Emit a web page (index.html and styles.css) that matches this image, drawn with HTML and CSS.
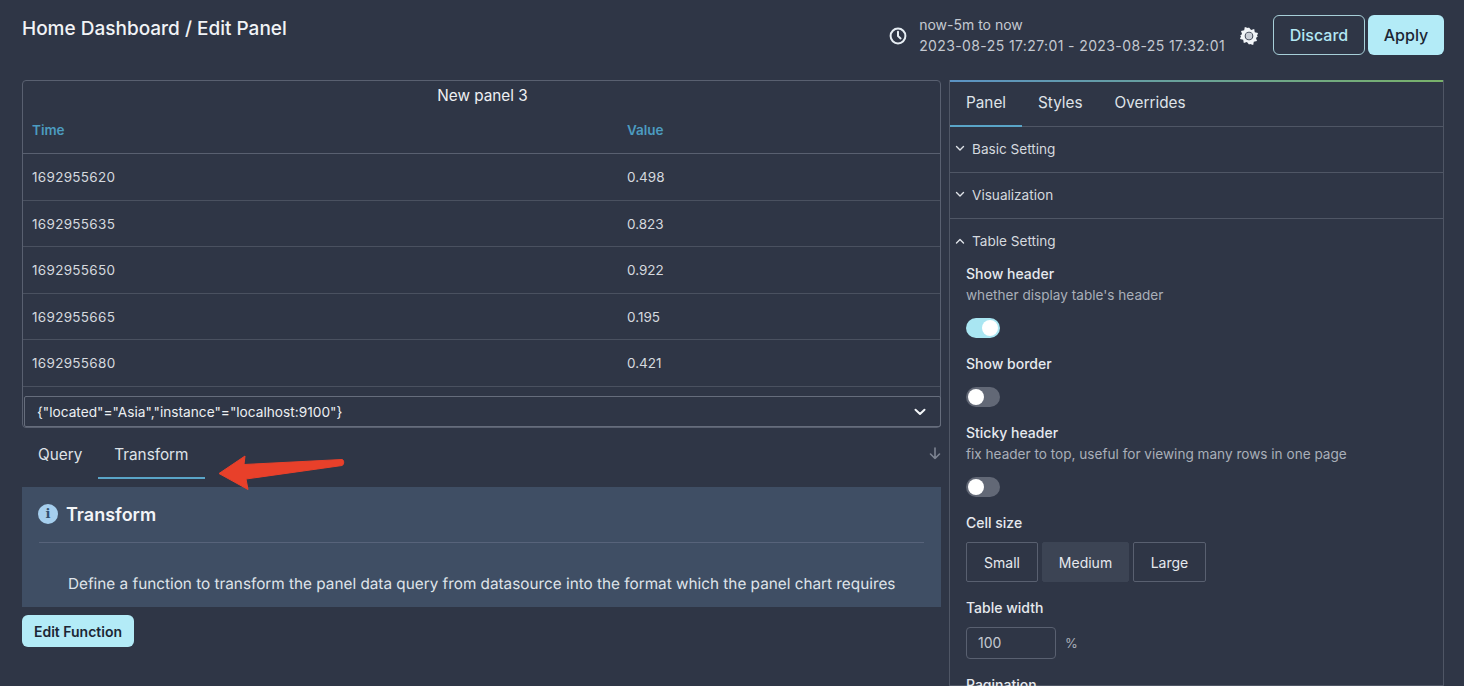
FILE: index.html
```html
<!DOCTYPE html>
<html lang="en">
<head>
    <meta charset="UTF-8">
    <title>Home Dashboard / Edit Panel</title>
    <link rel="stylesheet" href="styles.css">
</head>
<body>
    <header class="top-bar">
        <h1 class="page-title">Home Dashboard / Edit Panel</h1>
        <div class="top-actions">
            <svg class="clock-icon" width="18" height="18" viewBox="0 0 18 18" fill="none" stroke="#e6edf3" stroke-width="2" stroke-linecap="round" stroke-linejoin="round"><circle cx="9" cy="9" r="7.4"/><path d="M9 4.800V9l2.600 2.400"/></svg>
            <div class="time-range">
                <div>now-5m to now</div>
                <div class="time-exact">2023-08-25 17:27:01 - 2023-08-25 17:32:01</div>
            </div>
            <svg class="sun-icon" width="18" height="18" viewBox="0 0 18 18"><path fill="#f2f5f8" d="M9 .6l2.100 2.500 3.100-1 .6 3.200 3.200.6-1 3.100L18 9l-2 2 1 3.100-3.200.6-.6 3.200-3.100-1L9 17.400l-2.100-2.500-3.100 1-.6-3.200-3.200-.6 1-3.100L0 9l2-2-1-3.100 3.200-.6.6-3.200 3.100 1z"/><circle cx="9" cy="9" r="4.300" fill="#2f3646"/><circle cx="9" cy="9" r="3.400" fill="#c9ced6"/></svg>
            <button class="btn btn-outline">Discard</button>
            <button class="btn btn-primary">Apply</button>
        </div>
    </header>

    <main class="editor">
        <section class="left-col">
            <div class="preview">
                <div class="preview-title">New panel 3</div>
                <table class="data-table">
                    <thead>
                        <tr><th class="col-time">Time</th><th>Value</th></tr>
                    </thead>
                    <tbody>
                        <tr><td>1692955620</td><td>0.498</td></tr>
                        <tr><td>1692955635</td><td>0.823</td></tr>
                        <tr><td>1692955650</td><td>0.922</td></tr>
                        <tr><td>1692955665</td><td>0.195</td></tr>
                        <tr><td>1692955680</td><td>0.421</td></tr>
                    </tbody>
                </table>
                <div class="series-select">
                    <span>{"located"="Asia","instance"="localhost:9100"}</span>
                    <svg width="12" height="8" viewBox="0 0 12 8" fill="none" stroke="#f2f5f8" stroke-width="2" stroke-linecap="round" stroke-linejoin="round"><path d="M1.500 1.800L6 6l4.500-4.200"/></svg>
                </div>
            </div>

            <div class="query-tabs">
                <div class="tab">Query</div>
                <div class="tab tab-active">Transform</div>
                <svg class="down-icon" width="12" height="13" viewBox="0 0 12 13" fill="none" stroke="#7d8492" stroke-width="1.600" stroke-linecap="round" stroke-linejoin="round"><path d="M6 1v10.500M1.500 7L6 11.500 10.500 7"/></svg>
            </div>

            <div class="alert">
                <div class="alert-head">
                    <span class="info-icon">i</span>
                    <span class="alert-title">Transform</span>
                </div>
                <p class="alert-text">Define a function to transform the panel data query from datasource into the format which the panel chart requires</p>
            </div>
            <button class="btn-edit">Edit Function</button>
        </section>

        <aside class="settings">
            <div class="settings-tabs">
                <div class="tab tab-active">Panel</div>
                <div class="tab">Styles</div>
                <div class="tab">Overrides</div>
            </div>
            <div class="section-row">
                <svg width="10" height="7" viewBox="0 0 10 7" fill="none" stroke="#dfe3e8" stroke-width="1.400" stroke-linecap="round" stroke-linejoin="round"><path d="M1.500 1.500L5 5l3.500-3.500"/></svg>
                Basic Setting
            </div>
            <div class="section-row">
                <svg width="10" height="7" viewBox="0 0 10 7" fill="none" stroke="#dfe3e8" stroke-width="1.400" stroke-linecap="round" stroke-linejoin="round"><path d="M1.500 1.500L5 5l3.500-3.500"/></svg>
                Visualization
            </div>
            <div class="section-row section-open">
                <svg width="10" height="7" viewBox="0 0 10 7" fill="none" stroke="#dfe3e8" stroke-width="1.400" stroke-linecap="round" stroke-linejoin="round"><path d="M1.500 5L5 1.500 8.500 5"/></svg>
                Table Setting
            </div>
            <div class="section-body">
                <div class="field-label">Show header</div>
                <div class="field-help">whether display table's header</div>
                <div class="switch switch-on"><span class="knob"></span></div>

                <div class="field-label label-gap">Show border</div>
                <div class="switch switch-nohelp"><span class="knob"></span></div>

                <div class="field-label label-gap">Sticky header</div>
                <div class="field-help">fix header to top, useful for viewing many rows in one page</div>
                <div class="switch"><span class="knob"></span></div>

                <div class="field-label label-gap">Cell size</div>
                <div class="size-group">
                    <button class="size-btn size-small">Small</button>
                    <button class="size-btn size-medium">Medium</button>
                    <button class="size-btn size-large">Large</button>
                </div>

                <div class="field-label label-gap">Table width</div>
                <div class="width-row">
                    <div class="num-input">100</div>
                    <span class="unit">%</span>
                </div>

                <div class="field-label label-gap">Pagination</div>
            </div>
        </aside>
    </main>

    <svg class="red-arrow" width="130" height="36" viewBox="0 0 130 36"><path fill="#e8402a" stroke="#e8402a" stroke-width="1" stroke-linejoin="round" d="M1 18.500L27 1l-1 8.500 98-5c2 0 2.500 5 0 6L28 24l2 10.500z"/></svg>
</body>
</html>
```

FILE: styles.css
```css
html, body {
    height: 686px;
    overflow: hidden;
}
body {
    margin: 0;
    background-color: #2f3646;
    color: #e6e9ee;
    font-family: Inter, "Liberation Sans", sans-serif;
    font-size: 14px;
}
.top-bar {
    display: flex;
    justify-content: space-between;
    align-items: flex-start;
    height: 80px;
    padding: 14px 20px 0 22px;
    box-sizing: border-box;
}
.page-title {
    margin: 4px 0 0;
    font-size: 19px;
    line-height: 22px;
    font-weight: 500;
    color: #f1f3f6;
}
.top-actions {
    display: flex;
    align-items: center;
    margin-top: -1px;
}
.clock-icon {
    margin: 2px 12px 0 0;
}
.time-range {
    padding-top: 1px;
    font-size: 14px;
    line-height: 21px;
    color: #c4c9d1;
    margin-right: 15px;
}
.time-exact {
    letter-spacing: .39px;
}
.sun-icon {
    margin: 2px 15px 0 0;
}
.btn {
    height: 40px;
    border-radius: 6px;
    font-family: inherit;
    font-size: 16px;
    font-weight: 500;
}
.btn-outline {
    width: 92px;
    margin-right: 3px;
    background: transparent;
    border: 1px solid #a7cfd8;
    color: #b3e8f4;
}
.btn-primary {
    width: 76px;
    background-color: #b3ebf7;
    border: none;
    color: #1c2634;
}
.editor {
    display: grid;
    grid-template-columns: 919px 495px;
    column-gap: 8px;
    padding-left: 22px;
}
.preview {
    height: 348px;
    box-sizing: border-box;
    border: 1px solid #596070;
    border-radius: 4px;
    display: flex;
    flex-direction: column;
}
.preview-title {
    text-align: center;
    font-size: 15.300px;
    line-height: 18px;
    padding: 6px 0 0 2px;
    color: #eef0f3;
}
.data-table {
    width: 100%;
    border-collapse: collapse;
    font-size: 13.500px;
    color: #d5d9df;
}
.data-table th {
    height: 47px;
    padding: 1px 9px 0;
    text-align: left;
    font-size: 13.500px;
    font-weight: 600;
    color: #4c9cc0;
    border-bottom: 1px solid #596070;
}
.data-table .col-time {
    width: 577px;
}
.data-table td {
    height: 44.500px;
    padding: 1px 9px 0;
    border-bottom: 1px solid #4a5160;
}
.data-table td:first-child {
    letter-spacing: .3px;
}
.series-select {
    display: flex;
    justify-content: space-between;
    align-items: center;
    height: 31px;
    box-sizing: border-box;
    margin: 9px -1px 0 1px;
    padding: 1px 14px 0 12px;
    border: 1px solid #666d7c;
    border-radius: 2px;
    font-size: 13.700px;
    color: #eceff2;
}
.query-tabs {
    display: flex;
    align-items: center;
    height: 51px;
    box-sizing: border-box;
}
.tab {
    padding: 0 16px;
    font-size: 15.300px;
    line-height: 53px;
    height: 51px;
    box-sizing: border-box;
    color: #dfe3e8;
}
.tab-active {
    border-bottom: 2px solid #5aa5c8;
}
.down-icon {
    margin-left: auto;
}
.alert {
    height: 120px;
    margin-top: 8px;
    box-sizing: border-box;
    padding: 14px 16px 0;
    background-color: #3f4e64;
}
.alert-head {
    display: flex;
    align-items: center;
    height: 42px;
    margin: 0 1px;
    border-bottom: 1px solid #57637a;
    padding-bottom: 15px;
    box-sizing: border-box;
}
.info-icon {
    width: 20px;
    height: 20px;
    margin-left: -1px;
    margin-right: 8px;
    border-radius: 50%;
    background-color: #a6cfee;
    color: #33506e;
    font-family: "DejaVu Serif", serif;
    font-size: 13px;
    font-weight: 700;
    line-height: 20px;
    text-align: center;
}
.alert-title {
    font-size: 18px;
    font-weight: 600;
    color: #f2f4f7;
}
.alert-text {
    margin: 31px 0 0 30px;
    font-size: 15.300px;
    text-rendering: geometricPrecision;
    line-height: 20px;
    color: #dfe4ea;
    white-space: nowrap;
}
.btn-edit {
    display: block;
    width: 112px;
    height: 32px;
    margin-top: 8px;
    border: none;
    border-radius: 6px;
    background-color: #b3ebf7;
    color: #1c2634;
    font-family: inherit;
    font-size: 14px;
    font-weight: 600;
}
.settings {
    height: 606px;
    box-sizing: border-box;
    border: 1px solid #4f5665;
    border-top: none;
    background: linear-gradient(90deg, #5b93c4, #79b26a) top / 100% 2px no-repeat;
}
.settings-tabs {
    display: flex;
    height: 47px;
    padding-top: 2px;
    box-sizing: border-box;
    border-bottom: 1px solid #4f5665;
}
.settings-tabs .tab {
    height: 45px;
    line-height: 42px;
}
.section-row {
    display: flex;
    align-items: center;
    gap: 7px;
    height: 46px;
    padding: 0 0 2px 5px;
    box-sizing: border-box;
    border-bottom: 1px solid #4f5665;
    font-size: 13.600px;
    color: #d5d9df;
}
.section-open {
    border-bottom: none;
}
.section-body {
    padding: 0 16px;
}
.field-label {
    font-size: 14px;
    line-height: 16px;
    font-weight: 500;
    color: #e6e9ee;
    margin-top: 1px;
}
.field-help {
    font-size: 13.600px;
    line-height: 16px;
    margin-top: 5px;
    color: #a9afb9;
}
.switch {
    display: flex;
    align-items: center;
    width: 34px;
    height: 20px;
    margin-top: 15px;
    border-radius: 10px;
    background-color: #626876;
    padding: 0 2px;
    box-sizing: border-box;
}
.switch-on {
    justify-content: flex-end;
    background-color: #a9e6f2;
}
.knob {
    width: 16px;
    height: 16px;
    border-radius: 50%;
    background-color: #fff;
}
.label-gap {
    margin-top: 18px;
}
.size-group {
    display: flex;
    gap: 4px;
    margin-top: 11px;
}
.size-btn {
    height: 40px;
    border: 1px solid #596070;
    border-radius: 2px;
    background: transparent;
    color: #e6e9ee;
    font-family: inherit;
    font-size: 14px;
}
.size-small {
    width: 72px;
}
.size-medium {
    width: 87px;
    border-color: #3c4454;
    background-color: #3c4454;
}
.size-large {
    width: 73px;
}
.width-row {
    display: flex;
    align-items: center;
    margin-top: 11px;
}
.num-input {
    width: 90px;
    height: 32px;
    box-sizing: border-box;
    padding: 0 11px;
    line-height: 30px;
    border: 1px solid #596070;
    border-radius: 4px;
    font-size: 14px;
    color: #c4c9d1;
}
.unit {
    margin-left: 9px;
    font-size: 13px;
    color: #a9afb9;
}
.red-arrow {
    position: absolute;
    left: 218px;
    top: 455px;
}
```
